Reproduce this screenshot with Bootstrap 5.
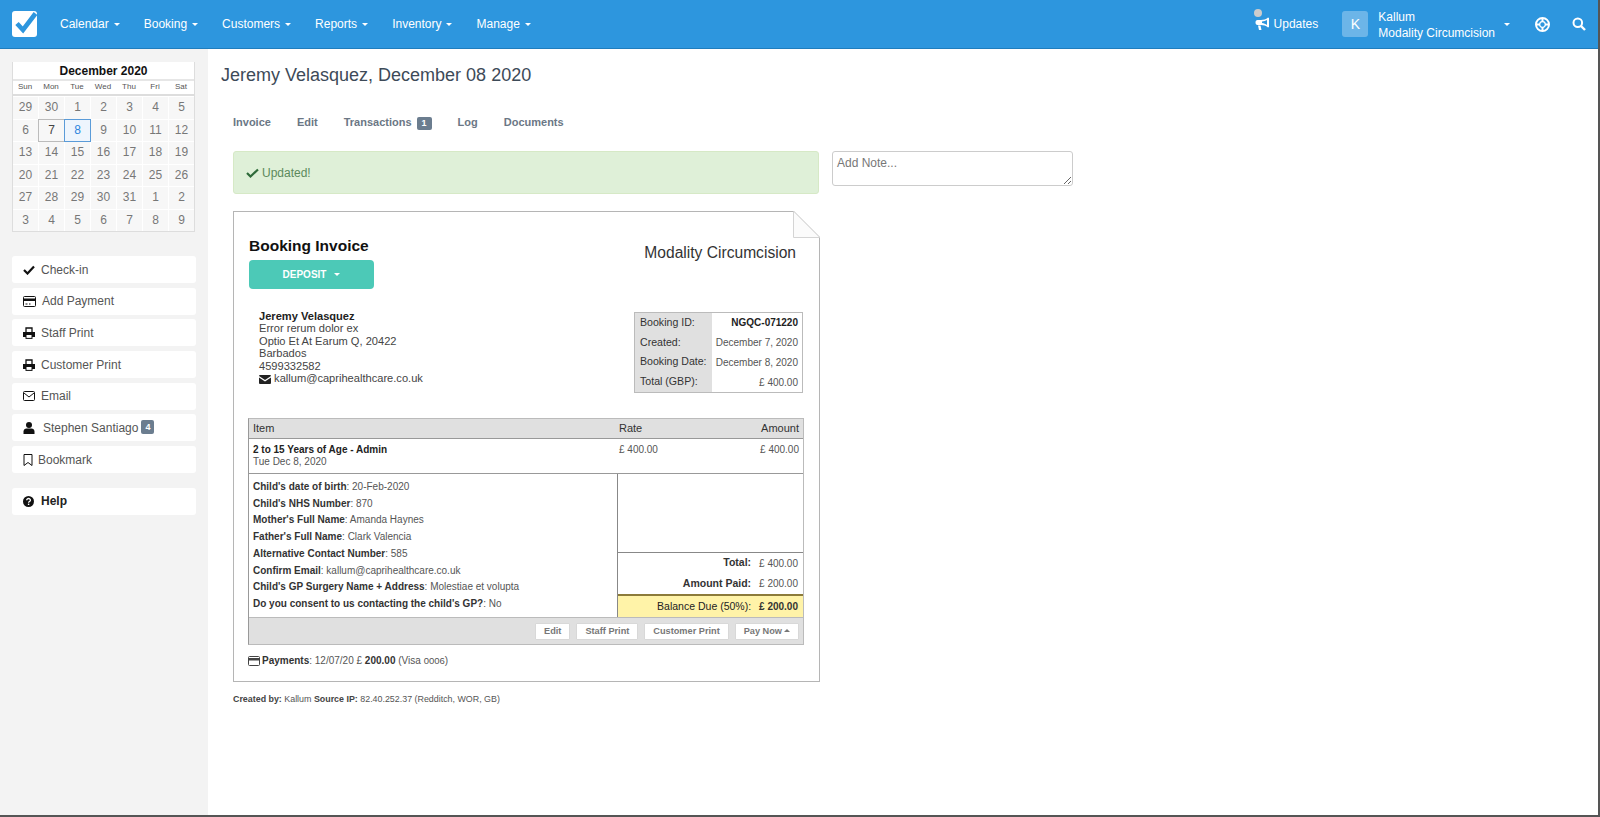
<!DOCTYPE html>
<html lang="en">
<head>
<meta charset="utf-8">
<title>Jeremy Velasquez, December 08 2020</title>
<link rel="stylesheet" href="https://cdn.jsdelivr.net/npm/bootstrap@5.3.0/dist/css/bootstrap.min.css">
<style>
html,body{height:100%;overflow:hidden}
body{font-family:"Liberation Sans",Arial,sans-serif;font-size:12px;color:#555;background:#fff}
.app-frame{height:817px;border-right:2px solid #555;border-bottom:2px solid #555;display:flex;flex-direction:column}
.app-body{min-height:0}
.top-bar{height:49px;flex:none;background:#2d96de;border-bottom:1px solid #1f7dbd;padding:0!important;align-items:center}
.logo-box{margin-left:11px;margin-right:9px;width:28px;height:28px;display:block}
.top-bar .navbar-nav .nav-link{color:#fff;font-size:12px;padding:0 12px;line-height:16px}
.top-bar .nav-link.dropdown-toggle::after{margin-left:5px;vertical-align:2px;border-top-width:3.5px;border-right-width:3.5px;border-left-width:3.5px}
.upd{color:#fff;position:relative;margin-right:24px;font-size:12px;line-height:16px}
.upd-dot{position:absolute;left:-1px;top:-7px;width:8px;height:8px;border-radius:50%;background:#ccc}
.upd svg{margin-right:4px}
.avatar{width:26px;height:26px;border-radius:3px;background:rgba(255,255,255,.3);color:#fff;font-size:14px;line-height:26px;text-align:center;margin-right:10px}
.acct{color:#fff;font-size:12px;line-height:16.5px;margin-right:9px;padding-top:2px}
.acct-caret{width:0;height:0;border-top:3.5px solid #fff;border-left:3.5px solid transparent;border-right:3.5px solid transparent;margin-right:25px}
.ico-help{margin-right:21px}
.ico-find{margin-right:12px;margin-left:1px}
.side{width:208px;flex:none;background:#f3f3f3;padding:13px 12px 0}
.cal{width:183px;background:#fff;border:1px solid #ddd;border-top:0}
.cal-title{height:19px;line-height:19px;font-weight:700;font-size:12px;color:#111;text-align:center;border-bottom:2px solid #e6e6e6}
.cal-days{display:grid;grid-template-columns:repeat(7,26px);height:15px;line-height:12px;font-size:8px;color:#555;text-align:center;border-bottom:2px solid #ddd}
.cal-days span{position:relative;left:-1px}
.cal-grid{display:grid;grid-template-columns:repeat(7,25px);grid-auto-rows:21.5px;gap:1px;padding:1px 0 0 0;font-size:12px;color:#777;text-align:center;line-height:21.5px}
.cal-grid>div{background:#f7f7f7}
.cal-grid .is-today{box-shadow:0 0 0 1px #bbb;background:#f7f7f7;color:#444}
.cal-grid .is-sel{box-shadow:0 0 0 1px #5a9bd8;background:#eef5fd;color:#2d86dd;z-index:1}
.side-list{margin-top:24px;display:flex;flex-direction:column;gap:4.7px}
.side-btn{display:flex;align-items:center;height:27px;width:184px;border:0;border-radius:3px;background:#fff;color:#555;font-size:12px;padding:0 0 0 11px;text-align:left}
.side-btn:hover{background:#fff;color:#555}
.side-btn svg{flex:none;color:#111;margin-right:6px}
.side-btn svg.gap-wide{margin-right:8px}
.side-btn svg.gap-thin{margin-right:5px}
.side-btn svg.gap-mid{margin-right:7px}
.side-badge{background:#6b7d8f;color:#fff;font-size:9px;padding:2px 4px;margin-left:3px;border-radius:2px;line-height:10px}
.side-help{margin-top:10px;font-weight:700;color:#222}
.page{flex:1;padding:0 0 0 13px;min-width:0}
.page-ttl{font-size:18px;font-weight:400;color:#3d4a58;margin:15px 0 0;line-height:22px}
.tab-row{margin:27px 0 0 12px;height:18px;align-items:center;gap:26px}
.tab-row .nav-link{padding:0;font-size:11px;font-weight:700;color:#6b7785;line-height:18px}
.tab-badge{background:#6b7d8f;color:#fff;font-size:9px;padding:2px 5px;margin-left:5px;border-radius:2px;line-height:9px;font-weight:700}
.work{margin:20px 0 0 12px;width:840px}
.flash{width:586px;height:43px;margin:0;padding:0 0 0 12px;display:flex;align-items:center;background:#dff0d8;border:1px solid #d6e9c6;border-radius:3px;color:#5c8a5c;font-size:12px}
.flash svg{margin-right:3px}
.note{width:241px;height:35px;margin-left:13px;min-height:0;padding:4px 4px;font-size:12px;border:1px solid #ccc;border-radius:3px;line-height:14px;color:#555}
.note::placeholder{color:#777}
.sheet{position:relative;width:587px;height:471px;margin-top:17px;border:1px solid #b5b5b5;padding:15px 14px 0 14px;color:#444}
.fold{position:absolute;right:-1px;top:-1px;width:27px;height:27px}
.sheet-head{height:76px;padding-left:1px}
.sheet-ttl{font-size:15.5px;font-weight:700;color:#111;margin:10px 0 5px;line-height:18px}
.dep-btn{display:flex;align-items:center;justify-content:center;width:125px;height:29px;background:#4cc9b7;border:0;border-radius:4px;color:#fff;font-size:10px;font-weight:700;padding:0}
.dep-btn:hover{background:#4cc9b7;color:#fff}
.dep-caret{width:0;height:0;border-top:3.5px solid #fff;border-left:3.5px solid transparent;border-right:3.5px solid transparent;margin-left:8px}
.sheet-co{font-size:15.6px;color:#333;margin:16px 9px 0 0;line-height:20px}
.sheet-mid{height:115px;justify-content:space-between}
.addr{margin:7px 0 0 11px;font-size:11.1px;line-height:12.4px;color:#444}
.addr b{color:#222}
.info-tbl{width:169px;height:81px;border:1px solid #bbb;border-collapse:collapse;margin:9px 2px 0 0;table-layout:fixed}
.info-tbl th{background:#e0e0e0;font-weight:400;font-size:10.6px;color:#333;padding:0 0 0 5px;width:77px}
.info-tbl td{text-align:right;padding:0 4px 0 0;color:#555;font-size:10px}
.info-tbl td.strong-id{font-weight:700;color:#222}
.lines{width:556px;border:1px solid #bbb;border-left-color:#999;font-size:10px;color:#555}
.line-head{height:20px;background:#e0e0e0;border-bottom:1px solid #999;display:flex;align-items:center;color:#333;font-size:11px}
.c-item{width:370px;padding-left:4px;flex:none}
.c-rate{width:90px;padding-left:0;flex:none}
.c-amt{flex:1;text-align:right;padding-right:4px}
.line-row{height:35px;border-bottom:1px solid #999;display:flex;padding-top:5px;line-height:12px}
.line-row b{color:#222}
.line-body{display:flex;height:143px}
.answers{width:369px;flex:none;border-right:1px solid #888;padding:5px 0 0 4px;line-height:16.7px}
.answers b{color:#333}
.sums{flex:1;display:flex;flex-direction:column}
.sum-gap{height:79px;flex:none;border-bottom:1px solid #888}
.sum-row{height:20.5px;flex:none;display:flex;justify-content:flex-end;align-items:center;padding-right:5px;color:#555}
.sum-row b{color:#333;margin-right:8px;font-size:10.5px}
.sum-due{height:23px;margin-top:auto;background:#fff3a8;border-top:2px solid #8c7b3a;color:#333;font-weight:700}
.sum-due b{font-weight:400;color:#222}
.line-foot{height:27px;background:#e0e0e0;border-top:1px solid #bbb;display:flex;justify-content:flex-end;align-items:center;gap:6px;padding-right:4px}
.mini-btn{height:17px;background:#fff;border:1px solid #d8d8d8;border-radius:1px;color:#777;font-size:9.2px;font-weight:700;padding:0 8px;line-height:15px}
.mini-btn:hover{background:#fff;color:#777}
.mini-caret{display:inline-block;width:0;height:0;border-bottom:3px solid #777;border-left:3px solid transparent;border-right:3px solid transparent;margin-left:2px;vertical-align:2px}
.pay-line{margin-top:9px;font-size:10px;color:#555;display:flex;align-items:center;line-height:14px;height:14px}
.pay-line svg{margin-right:2px}
.pay-line b{color:#333}
.pay-num{font-size:9.5px}
.made-by{margin:11px 0 0 0;font-size:8.9px;color:#555;line-height:12px}
.made-by b{color:#444}
</style>
</head>
<body>
<div class="app-frame">
<nav class="navbar navbar-expand top-bar">
  <svg class="logo-box" viewBox="0 0 28 28"><rect x="1" y="1" width="25" height="26" rx="3" fill="#fff"/><path d="M6 13.500l6 6.500L24.500 3.500" fill="none" stroke="#2d96de" stroke-width="4.600"/></svg>
  <ul class="navbar-nav">
    <li class="nav-item"><a class="nav-link dropdown-toggle" href="#">Calendar</a></li>
    <li class="nav-item"><a class="nav-link dropdown-toggle" href="#">Booking</a></li>
    <li class="nav-item"><a class="nav-link dropdown-toggle" href="#">Customers</a></li>
    <li class="nav-item"><a class="nav-link dropdown-toggle" href="#">Reports</a></li>
    <li class="nav-item"><a class="nav-link dropdown-toggle" href="#">Inventory</a></li>
    <li class="nav-item"><a class="nav-link dropdown-toggle" href="#">Manage</a></li>
  </ul>
  <div class="ms-auto d-flex align-items-center">
    <div class="upd d-flex align-items-center"><span class="upd-dot"></span>
      <svg width="15" height="14" viewBox="0 0 15 14"><path d="M14 1v9l-1 .5C11 8.700 8.500 8 6 8H2.500C1.200 8 .5 7 .5 5.500S1.200 3 2.500 3H6c2.500 0 5-.7 7-2.500z" fill="#fff"/><path d="M3 8.500h2.500l1 4.500H4z" fill="#fff"/><path d="M12 3v5c-1.500-1-3-1.600-5-1.900V4.500c2-.2 3.500-.7 5-1.500z" fill="#2d96de"/></svg>Updates</div>
    <div class="avatar">K</div>
    <div class="acct">Kallum<br>Modality Circumcision</div>
    <div class="acct-caret"></div>
    <svg class="ico-help" width="15" height="15" viewBox="0 0 15 15"><circle cx="7.500" cy="7.500" r="6.500" fill="none" stroke="#fff" stroke-width="2"/><circle cx="7.500" cy="7.500" r="2.800" fill="none" stroke="#fff" stroke-width="1.200"/><path d="M7.500 1v4M7.500 10v4M1 7.500h4M10 7.500h4" stroke="#fff" stroke-width="2"/></svg>
    <svg class="ico-find" width="14" height="14" viewBox="0 0 14 14"><circle cx="5.800" cy="5.800" r="4.300" fill="none" stroke="#fff" stroke-width="2"/><path d="M9 9l4 4" stroke="#fff" stroke-width="2.400"/></svg>
  </div>
</nav>
<div class="d-flex flex-grow-1 app-body">
  <aside class="side">
    <div class="cal">
      <div class="cal-title">December 2020</div>
      <div class="cal-days"><span>Sun</span><span>Mon</span><span>Tue</span><span>Wed</span><span>Thu</span><span>Fri</span><span>Sat</span></div>
      <div class="cal-grid">
        <div>29</div><div>30</div><div>1</div><div>2</div><div>3</div><div>4</div><div>5</div>
        <div>6</div><div class="is-today">7</div><div class="is-sel">8</div><div>9</div><div>10</div><div>11</div><div>12</div>
        <div>13</div><div>14</div><div>15</div><div>16</div><div>17</div><div>18</div><div>19</div>
        <div>20</div><div>21</div><div>22</div><div>23</div><div>24</div><div>25</div><div>26</div>
        <div>27</div><div>28</div><div>29</div><div>30</div><div>31</div><div>1</div><div>2</div>
        <div>3</div><div>4</div><div>5</div><div>6</div><div>7</div><div>8</div><div>9</div>
      </div>
    </div>
    <div class="side-list">
      <button class="btn side-btn"><svg width="12" height="10" viewBox="0 0 12 10"><path d="M1 5l3.500 3.500L11 1.500" fill="none" stroke="currentColor" stroke-width="2.200"/></svg>Check-in</button>
      <button class="btn side-btn"><svg width="13" height="11" viewBox="0 0 13 11"><rect x=".5" y=".5" width="12" height="10" rx="1" fill="none" stroke="currentColor"/><rect x="1" y="2.500" width="11" height="2.500" fill="currentColor"/><path d="M2.500 8h2M6 8h1.500" stroke="currentColor"/></svg>Add Payment</button>
      <button class="btn side-btn"><svg width="12" height="12" viewBox="0 0 12 12"><path d="M3 5V1h6v4" fill="none" stroke="currentColor" stroke-width="1.300"/><path d="M0 5h12v5H0z" fill="currentColor"/><rect x="3" y="7.500" width="6" height="3.900" fill="#fff" stroke="currentColor"/></svg>Staff Print</button>
      <button class="btn side-btn"><svg width="12" height="12" viewBox="0 0 12 12"><path d="M3 5V1h6v4" fill="none" stroke="currentColor" stroke-width="1.300"/><path d="M0 5h12v5H0z" fill="currentColor"/><rect x="3" y="7.500" width="6" height="3.900" fill="#fff" stroke="currentColor"/></svg>Customer Print</button>
      <button class="btn side-btn"><svg width="12" height="10" viewBox="0 0 12 10"><rect x=".5" y=".5" width="11" height="9" rx="1" fill="none" stroke="currentColor"/><path d="M1 2l5 4 5-4" fill="none" stroke="currentColor"/></svg>Email</button>
      <button class="btn side-btn"><svg class="gap-wide" width="12" height="12" viewBox="0 0 12 12"><circle cx="6" cy="3" r="3" fill="currentColor"/><path d="M.5 12V9.500C.5 7.500 2 6.500 3.500 6.500h5c1.500 0 3 1 3 3V12z" fill="currentColor"/></svg>Stephen Santiago<span class="badge side-badge">4</span></button>
      <button class="btn side-btn"><svg class="gap-thin" width="10" height="12" viewBox="0 0 10 12"><path d="M1 .5h8v11L5 8.500 1 11.500z" fill="none" stroke="currentColor"/></svg>Bookmark</button>
      <button class="btn side-btn side-help"><svg class="gap-mid" width="11" height="11" viewBox="0 0 11 11"><circle cx="5.500" cy="5.500" r="5.500" fill="currentColor"/><path d="M3.700 4.200c0-2.300 3.700-2.300 3.700 0 0 1.400-1.800 1.300-1.800 2.500" fill="none" stroke="#fff" stroke-width="1.300"/><rect x="4.900" y="7.600" width="1.400" height="1.400" fill="#fff"/></svg>Help</button>
    </div>
  </aside>
  <main class="page">
    <h1 class="page-ttl">Jeremy Velasquez, December 08 2020</h1>
    <ul class="nav tab-row">
      <li class="nav-item"><a class="nav-link" href="#">Invoice</a></li>
      <li class="nav-item"><a class="nav-link" href="#">Edit</a></li>
      <li class="nav-item"><a class="nav-link" href="#">Transactions<span class="badge tab-badge">1</span></a></li>
      <li class="nav-item"><a class="nav-link" href="#">Log</a></li>
      <li class="nav-item"><a class="nav-link" href="#">Documents</a></li>
    </ul>
    <div class="work">
      <div class="d-flex align-items-start">
        <div class="alert alert-success flash" role="alert"><svg width="13" height="10" viewBox="0 0 13 10"><path d="M1 5l3.500 3.500L12 1.500" fill="none" stroke="#2f6b3a" stroke-width="2.200"/></svg>Updated!</div>
        <textarea class="form-control note" placeholder="Add Note..."></textarea>
      </div>
      <section class="sheet">
        <svg class="fold" viewBox="0 0 27 27"><path d="M0 0H27V27z" fill="#fff"/><path d="M.5 0V26.500H27" fill="#fbfbfb" stroke="#d4d4d4"/><path d="M.5 0L27 26.500" stroke="#c4c4c4" fill="none"/></svg>
        <div class="d-flex justify-content-between sheet-head">
          <div>
            <h2 class="sheet-ttl">Booking Invoice</h2>
            <button class="btn dep-btn">DEPOSIT<span class="dep-caret"></span></button>
          </div>
          <div class="sheet-co">Modality Circumcision</div>
        </div>
        <div class="d-flex sheet-mid">
          <div class="addr"><b>Jeremy Velasquez</b><br>Error rerum dolor ex<br>Optio Et At Earum Q, 20422<br>Barbados<br>4599332582<br><svg width="12" height="9" viewBox="0 0 12 9"><path d="M0 1a1 1 0 011-1h10a1 1 0 011 1L6 5z" fill="#222"/><path d="M0 2.500L6 6.500l6-4V8a1 1 0 01-1 1H1a1 1 0 01-1-1z" fill="#222"/></svg> kallum@caprihealthcare.co.uk</div>
          <table class="info-tbl">
            <tr><th>Booking ID:</th><td class="strong-id">NGQC-071220</td></tr>
            <tr><th>Created:</th><td>December 7, 2020</td></tr>
            <tr><th>Booking Date:</th><td>December 8, 2020</td></tr>
            <tr><th>Total (GBP):</th><td>£ 400.00</td></tr>
          </table>
        </div>
        <div class="lines">
          <div class="line-head"><div class="c-item">Item</div><div class="c-rate">Rate</div><div class="c-amt">Amount</div></div>
          <div class="line-row"><div class="c-item"><b>2 to 15 Years of Age - Admin</b><br>Tue Dec 8, 2020</div><div class="c-rate">£ 400.00</div><div class="c-amt">£ 400.00</div></div>
          <div class="line-body">
            <div class="answers">
              <div><b>Child's date of birth</b>: 20-Feb-2020</div>
              <div><b>Child's NHS Number</b>: 870</div>
              <div><b>Mother's Full Name</b>: Amanda Haynes</div>
              <div><b>Father's Full Name</b>: Clark Valencia</div>
              <div><b>Alternative Contact Number</b>: 585</div>
              <div><b>Confirm Email</b>: kallum@caprihealthcare.co.uk</div>
              <div><b>Child's GP Surgery Name + Address</b>: Molestiae et volupta</div>
              <div><b>Do you consent to us contacting the child's GP?</b>: No</div>
            </div>
            <div class="sums">
              <div class="sum-gap"></div>
              <div class="sum-row"><b>Total:</b>£ 400.00</div>
              <div class="sum-row"><b>Amount Paid:</b>£ 200.00</div>
              <div class="sum-row sum-due"><b>Balance Due (50%):</b>£ 200.00</div>
            </div>
          </div>
          <div class="line-foot">
            <button class="btn mini-btn">Edit</button>
            <button class="btn mini-btn">Staff Print</button>
            <button class="btn mini-btn">Customer Print</button>
            <button class="btn mini-btn">Pay Now<span class="mini-caret"></span></button>
          </div>
        </div>
        <div class="pay-line"><svg width="12" height="10" viewBox="0 0 12 10"><rect x=".5" y=".5" width="11" height="9" rx="1" fill="none" stroke="#444"/><rect x="1" y="2" width="10" height="2.500" fill="#444"/></svg><span><b>Payments</b>: 12/07/20 £ <b>200.00</b> (Visa <span class="pay-num">0006</span>)</span></div>
      </section>
      <p class="made-by"><b>Created by:</b> Kallum <b>Source IP:</b> 82.40.252.37 (Redditch, WOR, GB)</p>
    </div>
  </main>
</div>
</div>
</body>
</html>
